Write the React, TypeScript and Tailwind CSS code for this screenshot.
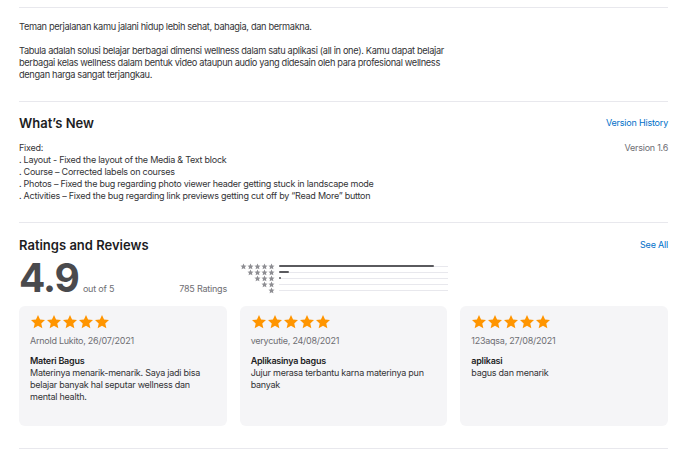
import React from "react";

const Star = ({ size, color }: { size: number; color: string }) => (
  <svg width={size} height={size} viewBox="0 0 24 24" fill={color}>
    <path d="M12 1.5l3.09 6.9 7.41.74-5.6 5 1.6 7.36L12 17.75 5.5 21.5l1.6-7.36-5.6-5 7.41-.74z" />
  </svg>
);

const reviews = [
  {
    author: "Arnold Lukito, 26/07/2021",
    title: "Materi Bagus",
    body: "Materinya menarik-menarik. Saya jadi bisa belajar banyak hal seputar wellness dan mental health.",
  },
  {
    author: "verycutie, 24/08/2021",
    title: "Aplikasinya bagus",
    body: "Jujur merasa terbantu karna materinya pun banyak",
  },
  {
    author: "123aqsa, 27/08/2021",
    title: "aplikasi",
    body: "bagus dan menarik",
  },
];

const hist = [
  { stars: 5, pct: 92 },
  { stars: 4, pct: 6 },
  { stars: 3, pct: 1 },
  { stars: 2, pct: 0 },
  { stars: 1, pct: 0 },
];

export default function App() {
  return (
    <div
      className="w-[694px] h-[452px] bg-white text-[#1d1d1f] overflow-hidden pl-[19px] pr-[26px] pt-[7px]"
      style={{ fontFamily: "Inter, 'Noto Sans', sans-serif" }}
    >
      <div className="border-t border-[#e8e8ed] pt-[13px] pb-[20px] text-[9.25px] leading-[12px] tracking-[-0.35px] text-[#333336]">
        <p>Teman perjalanan kamu jalani hidup lebih sehat, bahagia, dan bermakna.</p>
        <p className="mt-[12px] w-[432px]">
          Tabula adalah solusi belajar berbagai dimensi wellness dalam satu aplikasi (all in one). Kamu dapat belajar
          berbagai kelas wellness dalam bentuk video ataupun audio yang didesain oleh para profesional wellness dengan
          harga sangat terjangkau.
        </p>
      </div>

      <div className="border-t border-[#e8e8ed] pt-[13px] pb-[20px]">
        <div className="flex items-center justify-between h-[16px]">
          <h2 className="text-[13px] font-semibold leading-[16px] text-[#1d1d1f]">What’s New</h2>
          <span className="text-[9px] tracking-[-0.2px] text-[#0070c9]">Version History</span>
        </div>
        <div className="mt-[11px] flex justify-between text-[9px] leading-[12px] tracking-[-0.25px] text-[#333336]">
          <div>
            <p>Fixed:</p>
            <p>. Layout - Fixed the layout of the Media &amp; Text block</p>
            <p>. Course – Corrected labels on courses</p>
            <p>. Photos – Fixed the bug regarding photo viewer header getting stuck in landscape mode</p>
            <p>. Activities – Fixed the bug regarding link previews getting cut off by “Read More” button</p>
          </div>
          <span className="text-[#6e6e73]">Version 1.6</span>
        </div>
      </div>

      <div className="border-t border-[#e8e8ed] pt-[14px]">
        <div className="flex items-center justify-between h-[16px]">
          <h2 className="text-[13px] font-semibold leading-[16px] text-[#1d1d1f]">Ratings and Reviews</h2>
          <span className="text-[9px] tracking-[-0.2px] text-[#0070c9]">See All</span>
        </div>

        <div className="mt-[5px] flex items-start h-[39px]">
          <div className="w-[208px] flex items-baseline">
            <span className="text-[39px] font-bold leading-[39px] tracking-[-1px] text-[#4a4a4d]">4.9</span>
            <span className="ml-[4px] text-[9px] tracking-[-0.2px] text-[#6e6e73]">out of 5</span>
            <span className="ml-auto text-[9px] tracking-[-0.2px] text-[#6e6e73]">785 Ratings</span>
          </div>
          <div className="ml-[13px] mt-[5px] flex flex-col">
            {hist.map((h) => (
              <div key={h.stars} className="flex items-center h-[6px]">
                <div className="w-[35px] flex justify-end">
                  {Array.from({ length: h.stars }).map((_, i) => (
                    <Star key={i} size={7} color="#8e8e93" />
                  ))}
                </div>
                <div className="ml-[4px] w-[169px] h-[2px] flex items-center relative">
                  <div className="absolute left-0 right-0 h-[1px] bg-[#e8e8ed]" />
                  <div className="relative h-[2px] bg-[#5a5a5e] rounded-full" style={{ width: `${h.pct}%` }} />
                </div>
              </div>
            ))}
          </div>
        </div>

        <div className="mt-[9px] grid grid-cols-3 gap-[13px] pb-[22px] border-b border-[#e8e8ed]">
          {reviews.map((r) => (
            <div key={r.author} className="h-[120px] rounded-[6px] bg-[#f5f5f7] px-[11px] pt-[8px]">
              <div className="flex">
                {Array.from({ length: 5 }).map((_, i) => (
                  <Star key={i} size={16} color="#ff9500" />
                ))}
              </div>
              <p className="mt-[5px] text-[9px] leading-[12px] tracking-[-0.25px] text-[#6e6e73]">{r.author}</p>
              <p className="mt-[8px] text-[9px] leading-[12px] tracking-[-0.25px] font-semibold text-[#1d1d1f]">{r.title}</p>
              <p className="text-[9px] leading-[12px] tracking-[-0.25px] text-[#333336] pr-[12px]">{r.body}</p>
            </div>
          ))}
        </div>
      </div>
    </div>
  );
}
